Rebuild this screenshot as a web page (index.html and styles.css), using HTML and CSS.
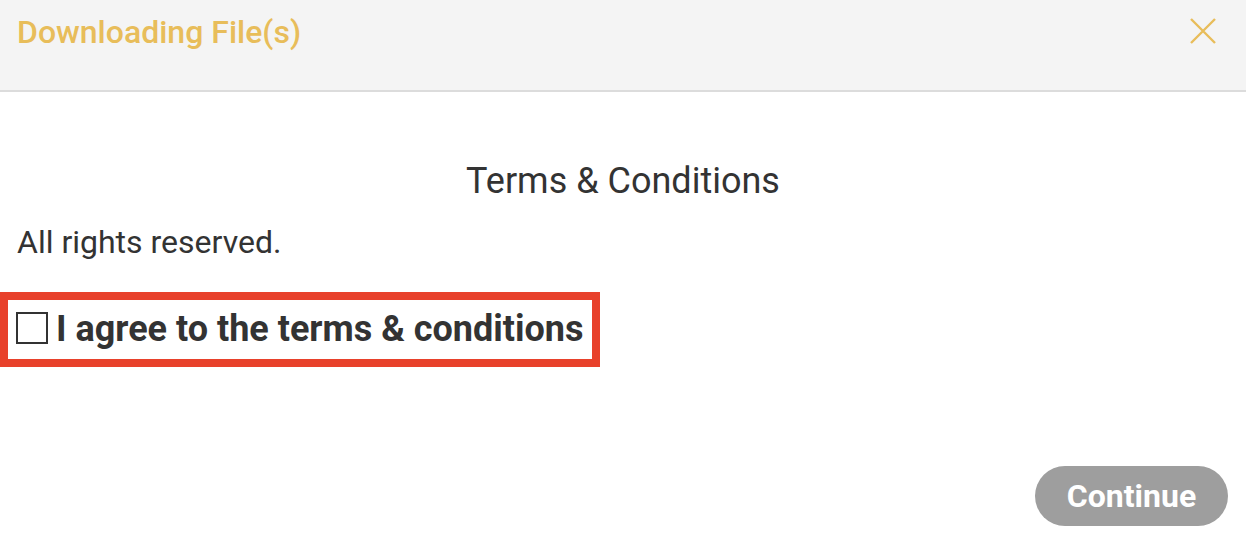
FILE: index.html
```html
<!DOCTYPE html>
<html lang="en">
<head>
	<meta charset="UTF-8">
	<title>Downloading File(s)</title>
	<link rel="stylesheet" href="styles.css">
</head>
<body>
<div class="modal">
    <div class="modal-header">
        <h2 class="modal-title">Downloading File(s)</h2>
        <a href="javascript:;" class="close">
            <svg width="30" height="30" viewBox="0 0 30 30">
                <path d="M3 3 L27 27 M27 3 L3 27" stroke="#e8bd5a" stroke-width="2.4" fill="none"/>
            </svg>
        </a>
    </div>
    <div class="modal-body">
        <h3 class="terms-title">Terms &amp; Conditions</h3>
        <p class="terms-text">All rights reserved.</p>
        <div class="agree-box">
            <label class="agree">
                <span class="check"></span>
                I agree to the terms &amp; conditions
            </label>
        </div>
    </div>
    <div class="modal-footer">
        <button class="btn-continue" disabled>Continue</button>
    </div>
</div>
</body>
</html>
```

FILE: styles.css
```css
* {
    margin: 0;
    padding: 0;
    box-sizing: border-box;
}

body {
    font-family: Roboto, "Liberation Sans", sans-serif;
    color: #333;
    background: #fff;
}

.modal {
    width: 1246px;
    height: 544px;
}

.modal-header {
    display: flex;
    justify-content: space-between;
    align-items: flex-start;
    height: 92px;
    padding: 13px 28px 0 17px;
    background: #f4f4f4;
    border-bottom: 2px solid #dcdcdc;
}

.modal-title {
    font-size: 32px;
    font-weight: 500;
    color: #e8bd5a;
    line-height: 38px;
}

.close {
    display: block;
    margin-top: 3px;
}

.terms-title {
    margin-top: 68px;
    text-align: center;
    font-size: 36px;
    font-weight: 400;
    line-height: 42px;
}

.terms-text {
    margin-top: 22px;
    padding-left: 17px;
    font-size: 32px;
    line-height: 36px;
}

.agree-box {
    display: inline-block;
    vertical-align: top;
    margin-top: 32px;
    padding: 9px 8px 10px 8px;
    border: 8px solid #e8412b;
}

.agree {
    display: flex;
    align-items: center;
    gap: 8px;
    font-size: 36px;
    font-weight: 700;
    line-height: 40px;
    white-space: nowrap;
}

.check {
    display: block;
    width: 32px;
    height: 32px;
    margin-top: -2px;
    border: 2px solid #333;
}

.modal-footer {
    display: flex;
    justify-content: flex-end;
    padding: 99px 18px 0 0;
}

.btn-continue {
    width: 193px;
    height: 60px;
    border: none;
    border-radius: 30px;
    background: #9e9e9e;
    color: #fff;
    font-family: Roboto, "Liberation Sans", sans-serif;
    font-size: 32px;
    font-weight: 700;
}
```
